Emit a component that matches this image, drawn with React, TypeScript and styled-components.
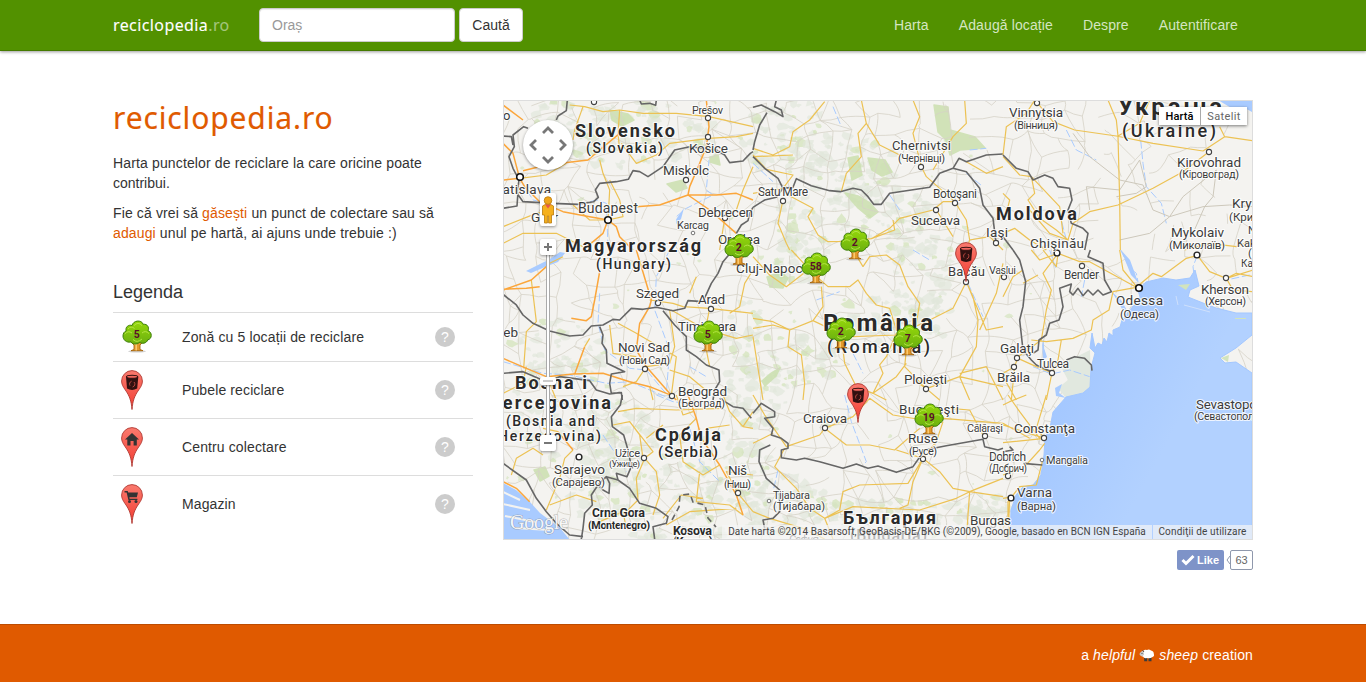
import React from 'react';
import styled, { createGlobalStyle } from 'styled-components';

const GlobalStyle = createGlobalStyle`
  * { box-sizing: border-box; }
  body {
    margin: 0;
    background: #fff;
    color: #333;
    font: 14px/20px "Liberation Sans", Arial, sans-serif;
  }
  a { color: #e05a00; text-decoration: none; }
  p { margin: 0 0 10px; }
`;

const Page = styled.div`
  display: flex;
  flex-direction: column;
  min-height: 682px;
`;
const Container = styled.div`
  width: 1170px;
  margin: 0 auto;
  padding: 0 15px;
  display: flex;
`;
const Tracked = styled.span<{ $by: number }>`
  letter-spacing: ${(p) => p.$by}px;
`;
const Header = styled.header`
  height: 51px;
  background: #529100;
  border-bottom: 1px solid #457a00;
  box-shadow: 0 1px 3px rgba(0, 0, 0, 0.4);
`;
const HeaderRow = styled(Container)`
  height: 50px;
  align-items: center;
`;
const Brand = styled.a`
  width: 146px;
  font: 16px/20px "Noto Sans", sans-serif;
  letter-spacing: 0.4px;
  -webkit-text-stroke: 0.1px;
  color: #fff;
  span { color: #a3c57b; }
`;
const SearchInput = styled.input`
  width: 196px;
  height: 34px;
  padding: 6px 12px;
  border: 1px solid #ccc;
  border-radius: 4px;
  box-shadow: inset 0 1px 1px rgba(0, 0, 0, 0.075);
  font: 14px/20px "Liberation Sans", sans-serif;
  &::placeholder { color: #999; opacity: 1; }
`;
const SearchButton = styled.button`
  height: 34px;
  width: 64px;
  margin-left: 4px;
  padding: 0;
  border: 1px solid #ccc;
  border-radius: 4px;
  background: #fff;
  color: #333;
  font: 14px/20px "Liberation Sans", sans-serif;
`;
const Nav = styled.nav`
  display: flex;
  gap: 30px;
  margin-left: auto;
  padding-right: 15px;
  letter-spacing: 0.11px;
  a { color: #d5e6c1; }
`;
const Main = styled(Container)`
  padding-top: 49px;
  gap: 30px;
  height: 573px;
  align-items: flex-start;
`;
const Side = styled.section`width: 360px;`;
const Title = styled.h1`
  margin: 1px 0 17px;
  height: 35px;
  font: 400 30px/33px "Noto Sans", sans-serif;
  letter-spacing: 0.87px;
  -webkit-text-stroke: 0.15px;
  color: #e05a00;
`;
const LegendTitle = styled.h2`
  margin: 39px 0 10px;
  font-size: 18px;
  font-weight: 400;
  line-height: 20px;
`;
const LegendRow = styled.div<{ $h: number }>`
  display: flex;
  align-items: center;
  height: ${(p) => p.$h}px;
  border-top: 1px solid #ddd;
  padding: 0 18px 0 8px;
`;
const LegendIcon = styled.div`
  width: 61px;
  display: flex;
  svg { display: block; }
`;
const Help = styled.span`
  margin-left: auto;
  width: 20px;
  height: 20px;
  border-radius: 50%;
  background: #ccc;
  color: #fff;
  text-align: center;
`;
const MapColumn = styled.section`width: 750px;`;
const MapFrame = styled.div`
  position: relative;
  height: 440px;
  border: 1px solid #ddd;
  overflow: hidden;
  font-family: Roboto, sans-serif;
  > svg { display: block; }
`;
const MapTypes = styled.div`
  position: absolute;
  top: 6px;
  right: 5px;
  display: flex;
  height: 18px;
  background: #fff;
  box-shadow: 0 1px 3px rgba(0, 0, 0, 0.5);
  font-size: 11px;
  line-height: 19px;
`;
const MapType = styled.span<{ $on?: boolean }>`
  width: ${(p) => (p.$on ? 42 : 46)}px;
  text-align: center;
  letter-spacing: ${(p) => (p.$on ? 0.1 : 0.35)}px;
  color: ${(p) => (p.$on ? '#000' : '#666')};
  font-weight: ${(p) => (p.$on ? 500 : 400)};
  border-right: ${(p) => (p.$on ? '1px solid #aaa' : '0')};
`;
const PanWheel = styled.div`
  position: absolute;
  left: 19px;
  top: 19px;
  width: 50px;
  height: 50px;
  border-radius: 50%;
  background: #fff;
  box-shadow: 0 1px 3px rgba(0, 0, 0, 0.4);
`;
const ZoomRail = styled.div`
  position: absolute;
  left: 42px;
  top: 152px;
  width: 4px;
  height: 182px;
  background: #fff;
  border: solid #aaa;
  border-width: 0 1px;
`;
const ZoomThumb = styled.div`
  position: absolute;
  left: 36px;
  top: 276px;
  width: 16px;
  height: 8px;
  border-radius: 2px;
  background: #fff;
  box-shadow: 0 1px 2px rgba(0, 0, 0, 0.4);
  &::after {
    content: '';
    display: block;
    margin: 3px;
    height: 2px;
    background: #ccc;
  }
`;
const ControlButton = styled.div<{ $top: number; $h?: number }>`
  position: absolute;
  left: 36px;
  top: ${(p) => p.$top}px;
  width: 16px;
  height: ${(p) => p.$h ?? 16}px;
  border-radius: 2px;
  background: #fff;
  box-shadow: 0 1px 3px rgba(0, 0, 0, 0.4);
  svg { display: block; }
`;
const Attribution = styled.div`
  position: absolute;
  right: 0;
  bottom: 0;
  display: flex;
  height: 14px;
  font-size: 10px;
  line-height: 14px;
  color: #444;
  white-space: nowrap;
`;
const Credit = styled.span<{ $w: number; $by: number }>`
  width: ${(p) => p.$w}px;
  letter-spacing: ${(p) => p.$by}px;
  background: rgba(245, 245, 245, 0.7);
  text-align: center;
  & + & { border-left: 1px solid #b3d1ff; }
`;
const Social = styled.div`
  display: flex;
  justify-content: flex-end;
  margin-top: 10px;
  height: 20px;
  font-size: 11px;
`;
const LikeButton = styled.span`
  display: flex;
  align-items: center;
  width: 47px;
  padding-left: 4px;
  gap: 2px;
  border-radius: 2px;
  background: #7e93c8;
  color: #fff;
  font-weight: 700;
`;
const LikeCount = styled.span`
  width: 23px;
  border: 1px solid #8f98ac;
  border-radius: 2px;
  line-height: 18px;
  text-align: center;
  color: #666;
`;
const Footer = styled.footer`
  height: 58px;
  background: #e05a00;
  border-top: 1px solid #bd4c00;
  color: #fff;
`;
const FooterRow = styled(Container)`
  justify-content: flex-end;
  align-items: center;
  height: 60px;
  white-space: pre;
  letter-spacing: 0.13px;
`;

/* ---------- Icons ---------- */

const Tree = ({ n }: { n: string }) => (
  <g>
    <ellipse cx="15" cy="30.8" rx="9" ry="1.3" fill="#000" opacity=".18" />
    <path d="M7.5 20 L12 24.5 V29 L9 30.2 H21 L18 29 V24.5 L22.5 20Z" fill="#e39a2b" stroke="#a8660d" strokeWidth=".9" />
    <path d="M14.2 23V30M10.5 21L13.5 24" stroke="#ffd27c" strokeWidth="1.3" />
    <path
      d="M4.2 10.5 C3 6.5 6.5 3.8 10.2 5 C11 -.2 19.5 -1.2 21.2 3.8 C25.4 3.2 27.6 7 26 10.3 C30.4 11.4 30.4 18.6 25.7 19.4 C24.6 22.9 20 23.6 17.8 21.8 C14.5 24.4 10.2 23.8 9 21.4 C4.4 22.6 1 19.2 1 15.6 C1 13 2.2 11 4.2 10.5Z"
      fill="url(#leaf)"
      stroke="#3b7d08"
      strokeWidth="1"
    />
    <path d="M2.8 13.5Q6 9.5 10 12.5M6 8.5Q9 5 12.5 8M12 5Q16 .8 20 5M20 12.5Q23.5 9.5 27 13M11 19Q15 23 20 18.5" fill="none" stroke="#b4e445" strokeWidth="1" />
    <text x="14.8" y="17" textAnchor="middle" fontSize="10.5" fontWeight="700" fontFamily="Roboto" fill="#5a1028">{n}</text>
  </g>
);

type PinKind = 'bin' | 'house' | 'cart';
const Pin = ({ kind }: { kind: PinKind }) => (
  <g>
    <path d="M11 39.5 C10.3 31 8.6 26 4.2 19.8 C1.8 16.5 .6 14 .6 11 A10.4 10.4 0 0 1 21.4 11 C21.4 14 20.2 16.5 17.8 19.8 C13.4 26 11.7 31 11 39.5Z" fill="url(#pin)" stroke="#b03a33" strokeWidth=".9" />
    {kind === 'bin' && (
      <g>
        <path d="M5 6.8 L6 18.6 Q11 21.2 16.2 18.6 L17.3 6.8Z" fill="#301010" />
        <ellipse cx="11.1" cy="6.8" rx="5.6" ry="1.5" fill="#f5665c" stroke="#301010" strokeWidth="1.1" />
        <path d="M10.6 11.2 A3 3 0 0 0 9 15.6M11.6 17A3 3 0 0 0 13 12" fill="none" stroke="#b5463f" strokeWidth="1" />
      </g>
    )}
    {kind === 'house' && <path d="M11 6 L18 12.5 H15.8 V18.5 H12.6 V14 H9.5 V18.5 H6.3 V12.5 H4Z" fill="#333" />}
    {kind === 'cart' && (
      <g fill="#333">
        <path d="M3.5 7H6.7L7.2 8.5H17L15.8 13.3H8.4L8.6 14.8H16.4V16H7.4L5.6 8.4H3.5Z" />
        <circle cx="8.5" cy="17.5" r="1.5" />
        <circle cx="15" cy="17.5" r="1.5" />
      </g>
    )}
  </g>
);

const Sheep = () => (
  <svg width="16" height="14" viewBox="0 0 16 14">
    <path d="M5.2 9h3v4.3h-3zM9.5 9h3v4.3h-3z" fill="#3b3b3b" />
    <path d="M4 3Q6 1 8 2Q10 1 12 2.5Q15 3.2 14.8 6Q15.8 8 13.5 9Q11 10.8 8 10Q5 10.8 4 8.5Q2.5 8.5 2 7L2.3 4.5Z" fill="#fff" />
    <path d="M.4 6L2.2 3.6L4.6 3.2L5 6.5L3.4 8.6L1.5 7.8Z" fill="#c9c9c9" />
    <path d="M2.4 5.4h1.2M3.5 2.2L5 4" stroke="#555" />
  </svg>
);

/* ---------- Map data ---------- */
/* The map is cut in sheets of 250 x 150, each drawn at three units to a pixel. */

type Sheet = { x: number; y: number; border?: string; motor?: string; road?: string; minor?: string; river?: string };

const SHEETS: Sheet[] = [
  {
    x: 503, y: 100,
    border: 'M193 0L190 32L165 48L160 60M75 85L62 80L30 105L34 140L18 170L30 205L48 240L42 280L60 305L150 310L225 313L272 305L286 292L277 270L290 250L340 245L376 238L390 212L410 215L435 230L480 200L515 150L560 140L640 150L665 165L680 188L720 183L742 160L750 155M0 108L25 110L30 135M0 325L42 318L45 275M410 0L415 12L440 10L458 16L460 0M700 400L715 375L735 362L740 340L750 322',
    motor: 'M0 240L50 235L65 260L110 305L180 335L260 350L315 360L300 400L240 450M50 235L30 160L0 130M60 212L130 195L255 180L290 150L350 100M315 360L340 380L350 410L390 450M400 320L470 315L555 285L640 285L700 280L750 300M560 260L590 190L610 140L618 80L610 0M555 285L560 260M0 15L60 60M555 285L620 330L700 400',
    road: 'M200 15L245 20L300 35L350 30L420 40L520 40L618 50L750 80M350 30L345 100L350 150M50 235L130 225L190 190M315 360L320 270L300 220L290 180M315 360L360 350L350 300L320 240M618 115L700 110L750 100M618 115L500 130L460 165L400 190L355 130M0 380L100 340L160 330M0 430L60 400L160 400L240 440M750 200L720 270L700 330L665 355L650 450M210 315L260 360L315 360M240 20L215 90L210 120',
    river: 'M55 245L90 300L160 315M230 312L282 300L310 310L315 440M525 380L520 350L550 325L630 285L610 270L618 180',
  },
  {
    x: 753, y: 100,
    border: 'M0 22L25 15L65 35L90 50L85 30L65 20L70 0M42 38L20 75L5 125L0 150M0 170L35 205L75 235L90 265L70 292L35 300L0 322M88 265L120 262L130 236L175 257L230 272L262 275L300 265L325 270L345 290L362 313L385 313L410 280L530 262L560 220L600 205L640 215L680 265L690 315L720 355L728 420M600 205L618 175L640 185L700 165L750 162',
    road: 'M0 145L60 165L110 140L120 95L170 60L215 5M0 170L120 165M0 280L90 265L120 225L40 208L0 165M90 300L75 370L100 430L110 450M105 285L180 325L165 350L195 405L225 425L280 424L355 416L410 385L440 355L540 330L570 305L605 305L520 230L505 200L480 100L500 50L480 0M325 0L340 70L315 100L325 170L280 220L265 275M340 70L380 135L440 165M540 210L600 110L640 70L635 0M605 305L640 360L650 420L710 410L750 450M640 185L700 220L750 200M650 420L640 450M550 330L600 410M420 360L425 390L355 416',
    river: 'M0 190L60 245M640 220L690 260M240 20L265 80M410 285L440 330M650 150L700 145',
  },
  {
    x: 1003, y: 100,
    border: 'M0 165L40 205L75 215L90 240L125 225L150 235L165 260L200 265L207 300L195 330L205 370L240 385L255 400L245 450M0 410L30 450M650 0L660 0',
    road: 'M0 165L10 80L70 40L95 0M100 5L150 65L215 90L340 108L450 130L600 153L665 110L750 122M315 0L340 60L345 108L350 300L352 450M0 170L50 225L85 230L95 280L75 300L110 355L160 390L195 420L210 370L260 335L345 315L450 265L540 215L618 155M345 108L410 70L440 0M0 280L20 300L10 340M195 420L140 400L80 330M180 400L170 320L85 230M0 400L35 385L80 420L130 450M650 80L665 110M545 450L620 430L700 440L750 420',
    minor: 'M210 100L260 170L350 240L420 255L450 330L500 350L600 320L680 315L750 320M500 350L540 290L640 210L630 290L605 320L570 400M260 330L250 260L350 270L410 180L430 260L400 280L340 290M500 350L440 400L350 420',
    river: 'M190 90L220 150L280 180M410 90L420 190L430 260L475 310L490 370M190 420L170 340',
  },
  {
    x: 503, y: 250,
    border: 'M0 133L40 165L60 195L90 220L140 243L200 258L240 255L265 228L300 225L330 208L350 210L385 175L420 178L460 172L510 182L545 175L555 152L600 155L625 100L645 70L660 35L690 0M480 182L515 225L550 260L550 300L580 320L610 345L648 360L650 395L635 420L630 450M290 230L300 255L297 280L310 300L312 340L365 365L325 372L320 400L325 430L355 428L358 450M0 370L60 365L90 378L130 395L170 380L260 392L280 420L320 432L350 428',
    motor: 'M0 120L85 90L130 50M110 110L70 115L0 118M290 65L275 150L265 200L250 212L205 205M400 0L445 150L440 170L410 220L400 300L430 350L505 436L520 450M0 325L70 355L130 380L210 372L300 370L380 395L440 410L505 436M245 290L215 372',
    road: 'M85 90L100 215L70 245L62 355M140 40L180 20M440 150L510 160L540 170L620 175L750 190M620 175L605 250L612 310L620 350M505 180L600 235L700 265L750 255M260 265L245 290M320 225L330 310L400 320M345 220L400 250L520 320L505 436M430 350L500 340L515 290L500 180M500 360L560 380L620 430M0 430L60 400L70 350M140 400L160 450M580 80L560 130M430 350L400 395L360 410M680 190L710 170L725 100L750 60M440 410L450 450',
    river: 'M290 130L285 220L305 300L380 355L430 360L480 420L500 440M0 335L120 370L200 375L310 400L380 395L500 445M500 0L460 80L455 180L500 300L490 430M560 350L610 380',
  },
  {
    x: 753, y: 250,
    road: 'M0 20L50 75L100 110L165 60L185 75L225 110L290 110L315 90L340 130L370 165L410 175L430 240M115 0L175 65M330 50L350 20L400 15L440 45L465 110L500 160L490 220L460 300L455 350L520 416L620 380L670 290L675 210L660 140L640 95L600 175L520 215L430 255L300 260L260 250L180 212L110 240L60 225L0 235M110 240L105 290L145 315L155 400L150 450M265 260L275 340L310 410L360 430L400 450M430 250L400 320L380 345L390 370L360 430M360 430L430 380L460 340M520 416L560 450M180 212L210 170L205 110M640 95L700 240L750 230M300 0L330 50M620 380L650 450M620 380L750 410M520 416L470 380M0 205L60 215L110 240M0 260L30 450M620 370L700 350L750 450M680 240L730 130L750 40',
    river: 'M645 100L690 200M480 0L530 30M300 310L330 370M190 150L260 125',
  },
  {
    x: 1003, y: 250,
    border: 'M30 0L50 30L68 95L60 170L50 210L60 300L85 330L100 345L145 365M262 0L255 20L300 40L305 90L325 125L300 135L285 120L270 135L255 120L240 137L225 115L210 135L200 125L205 102L170 115L180 170L168 210L140 220L130 255L108 270L105 300L90 310M190 330L215 320L245 325L265 345L267 362',
    road: 'M165 10L160 50L120 0M165 10L230 35L260 35L400 112L450 70L475 80L550 25L583 16L620 65L670 85L750 60M405 115L360 60L350 0M400 112L330 125L318 180L270 210L265 240L210 265L130 275L85 270M165 10L120 70L145 120L130 180L115 270L45 320L35 350L0 370M45 325L100 350L147 368M0 140L30 80L60 60M147 368L130 450M175 270L165 330L147 368M670 85L700 70L750 80M670 85L690 120L750 125M60 100L105 75M35 350L25 450M85 0L110 30L165 10M0 380L40 450',
    river: 'M353 0L390 75L405 95L400 70L375 50M583 16L570 50L575 90M140 0L160 60M245 90L235 140M120 270L125 330M90 350L145 372L200 360L260 380M740 75L670 90M330 130L345 150L360 180',
  },
  {
    x: 503, y: 395,
    border: 'M358 0L352 30L325 65L328 95L362 120L375 165L385 215L372 245L340 235L345 255L310 245L285 270L265 300L268 330L245 355L240 400L235 432M345 255L380 280L410 325L460 340L495 365L490 385L450 395L455 432M0 205L70 255L100 310L130 350L160 385L200 420L240 425M650 10L690 35L720 40L745 70M310 245L320 265L318 295L300 285L285 270',
    motor: 'M165 110L210 165M0 260L40 280L80 320M555 0L580 70L595 130L650 210L700 300L720 360',
    road: 'M210 165L185 190L170 250L130 345M165 110L120 100M25 240L40 190L90 160L120 180M425 190L460 230L470 300L450 360M425 190L400 250L405 315L360 360M345 50L400 40L520 45L660 40M520 0L540 60L570 50M580 70L530 120L540 200L600 240L650 210M660 0L680 50L720 95L750 100M705 295L670 230L750 240M330 90L380 80L450 170L425 190M480 370L535 300L600 310M490 390L560 350L700 340M590 230L580 320L680 330L720 360M610 100L680 90M750 50L720 95M290 380L360 350L370 400M140 330L220 300L280 320M705 295L750 350M480 90L430 130M380 80L410 120L420 190',
    river: 'M300 120L340 180L370 230M460 0L510 20L580 30M560 100L590 200L650 260',
  },
  {
    x: 753, y: 395,
    border: 'M0 55L25 25L65 50L65 65L35 70L60 100L55 120L85 130L105 145L105 160L85 165L85 188L130 195L155 190L200 200L270 220L310 207L345 220L375 213L430 232L480 215L515 165L580 152L690 133L695 155L735 165L750 160M52 150L20 165L18 200L40 250L80 285L80 350L60 370L30 375L35 400',
    road: 'M0 0L35 60L100 155L200 120L215 100L300 65L350 10L420 60L510 75L570 70L750 85M215 100L280 150L350 150L425 165L500 100M510 190L430 165M510 190L480 260L465 330L440 340M95 160L65 215L130 280L170 340L215 370M215 370L260 345L270 290L320 270L465 265L510 190M510 190L560 230L600 280L650 290L750 250M650 290L610 310L500 345L300 335L215 370M215 370L240 432M590 40L650 45L690 120M570 80L550 140L510 190M0 350L50 370L150 400L215 432M750 305L650 290L640 432M0 145L60 115',
    river: 'M275 0L295 80L340 200L330 210M75 225L60 290',
  },
  {
    x: 1003, y: 395,
    border: 'M0 170L30 165L20 155M60 205L118 210',
    road: 'M130 0L100 100L125 130L0 90M125 130L0 143M15 0L50 50L110 130M125 145L110 165L60 220L0 240M118 200L100 270L50 275L15 320L15 370L0 400M0 30L20 20L70 0M0 310L30 305M20 310L15 432M0 85L80 130',
  },
];

const SEA =
  'M1138 290L1146 282L1163 278L1176 280L1190 278L1195 270L1199 286L1190 290L1188 297L1203 303L1216 308L1236 313L1252 313V335L1236 348L1220 358L1225 363L1236 362L1252 373V540H1010L1011 510L1016 495L1023 487L1033 485L1041 475L1044 455L1045 438L1050 428L1053 412L1066 397L1083 393L1090 387L1091 368L1095 353L1090 348L1092 333L1095 348L1098 343L1102 345L1104 338L1107 342L1109 333L1113 336L1113 330L1120 327L1122 320L1130 310L1140 297Z';
const ADRIATIC = 'M503 483L516 490L530 502L540 513L560 528L570 540H503Z';

/* Repeatable pseudo random numbers for the fine texture. */
const random = (seed: number) => () => {
  seed = (seed * 16807) % 2147483647;
  return seed / 2147483647;
};

const countryLanes = (() => {
  const r = random(77);
  const cols = 44, rows = 27, step = 18;
  const at: number[][][] = [];
  for (let j = 0; j < rows; j++) {
    at.push([]);
    for (let i = 0; i < cols; i++) at[j].push([495 + i * step + r() * 16, 92 + j * step + r() * 16]);
  }
  let d = '';
  const link = (a: number[], b: number[]) => {
    const mx = (a[0] + b[0]) / 2 + (r() - 0.5) * 6, my = (a[1] + b[1]) / 2 + (r() - 0.5) * 6;
    d += `M${a[0].toFixed(1)} ${a[1].toFixed(1)}Q${mx.toFixed(1)} ${my.toFixed(1)} ${b[0].toFixed(1)} ${b[1].toFixed(1)}`;
  };
  for (let j = 0; j < rows - 1; j++)
    for (let i = 0; i < cols - 1; i++) {
      const sparse = at[j][i][0] > 1090 ? 0.3 : 0.66;
      if (r() < sparse) link(at[j][i], at[j][i + 1]);
      if (r() < sparse) link(at[j][i], at[j + 1][i]);
      if (r() < 0.1) link(at[j][i], at[j + 1][i + 1]);
    }
  return d;
})();

/* Hills and woods: centre, radii and number of patches. */
const HILLS = [
  [635, 135, 80, 35, 90], [565, 120, 30, 22, 25], [790, 140, 50, 40, 70], [850, 170, 50, 35, 60], [880, 215, 50, 35, 70],
  [920, 260, 35, 55, 70], [895, 320, 60, 25, 60], [800, 240, 30, 45, 60], [790, 360, 50, 28, 60], [760, 390, 35, 40, 55],
  [560, 350, 50, 30, 45], [570, 410, 60, 55, 60], [640, 490, 75, 50, 100], [720, 480, 55, 55, 80], [790, 505, 50, 30, 70],
  [900, 515, 95, 15, 60], [985, 515, 28, 20, 25], [620, 440, 35, 40, 50], [745, 330, 20, 35, 20],
];
const patches = (() => {
  const r = random(4242);
  const out: { d: string; c: string }[] = [];
  const blob = (x: number, y: number, s: number, c: string) => {
    const pts: string[] = [];
    for (let k = 0; k < 8; k++) {
      const a = (k / 8) * Math.PI * 2, q = s * (0.5 + r() * 0.8);
      pts.push(`${(x + Math.cos(a) * q * 1.3).toFixed(1)} ${(y + Math.sin(a) * q).toFixed(1)}`);
    }
    out.push({ d: `M${pts.join('L')}Z`, c });
  };
  HILLS.forEach(([x, y, rx, ry, n]) => {
    for (let k = 0; k < n; k++) {
      const a = r() * Math.PI * 2, q = Math.sqrt(r());
      blob(x + Math.cos(a) * rx * q, y + Math.sin(a) * ry * q, 1.5 + r() * 4, r() < 0.15 ? '#cfe2b3' : '#e1e7da');
    }
  });
  for (let k = 0; k < 80; k++) blob(505 + r() * 530, 102 + r() * 435, 1 + r() * 2.4, '#d3e4bb');
  return out;
})();

const WOODS =
  'M934 105L948 107L950 130L975 137L985 148L960 150L950 155L946 140L938 132ZM845 193L858 196L870 203L878 212L870 218L858 208ZM868 158L885 160L892 172L882 176L872 170ZM767 277L780 272L788 278L783 288L770 287ZM762 381L770 374L780 368L776 376L765 386ZM610 110L628 114L634 120L622 126L612 120ZM667 184L683 180L687 188L676 192ZM848 158L858 156L862 175L852 180ZM534 470L545 467L549 476L540 481ZM710 157L718 155L720 165L710 162Z';

type LabelRow = [text: string, left: number, base: number, size: number, width?: number, weight?: number];
const LABELS: LabelRow[] = [
  ['Slovensko', 575, 137, 18, 100, 700], ['(Slovakia)', 586, 153, 14, 77, 500],
  ['Prešov', 692, 114, 11, 31], ['Košice', 689, 153, 13.5, 39], ['Miskolc', 663, 175, 13.5, 46],
  ['Bratislava', 489, 193.5, 13.5, 62], ['Győr', 531, 222, 13.5, 27], ['o', 503, 120, 13],
  ['Budapest', 578, 213, 14, 60], ['Debrecen', 698, 217, 13.5, 55], ['Karcag', 677, 229, 11, 32],
  ['Magyarország', 565, 252, 18, 136, 700], ['(Hungary)', 596, 269, 14, 75, 500], ['Oradea', 718, 244, 13.5, 42],
  ['Satu Mare', 758, 196, 12, 50], ['Chernivtsi', 892, 150, 13, 59], ['(Чернівці)', 898, 162, 11, 47],
  ['Botoşani', 933, 198, 12, 44], ['Suceava', 911, 225, 13.5, 49], ['Moldova', 996, 220, 18, 81, 700],
  ['Iaşi', 986, 237, 13.5, 22], ['Chişinău', 1030, 248, 13.5, 54], ['Vinnytsia', 1009, 117, 13.5, 54],
  ['(Вінниця)', 1014, 129, 11, 44], ['Україна', 1118, 115, 24, 104, 700], ['(Ukraine)', 1122, 137, 18, 94, 500],
  ['Kirovohrad', 1177, 166.5, 13.5, 64], ['(Кіровоград)', 1179, 178, 11, 60], ['Kryvyi Rih', 1232, 208, 13.5], ['(Кривий Ріг)', 1229, 221, 11.5],
  ['Mykolaiv', 1171, 237, 13.5, 53], ['(Миколаїв)', 1169, 248.5, 11.5, 56], ['Nova', 1248, 234, 11], ['Kakhovka', 1237, 247, 11],
  ['(Нова', 1248, 257, 11], ['Каховка)', 1241, 267, 10], ['Kherson', 1201, 294, 13.5, 48], ['(Херсон)', 1205, 304.5, 11, 41],
  ['Odessa', 1116, 305, 13.5, 47], ['(Одеса)', 1120, 317.5, 11.5, 39], ['Bender', 1064, 279, 12, 35], ['Vaslui', 989, 274, 11, 27],
  ['Bacău', 948, 276, 13, 37], ['Galaţi', 1000, 353, 13.5, 34], ['Tulcea', 1037, 368, 12, 32], ['Brăila', 997, 382, 13.5, 33],
  ['Cluj-Napoca', 736, 273, 13.5, 74], ['Szeged', 636, 298, 13.5, 43], ['Arad', 698, 304, 13.5, 27], ['Timişoara', 678, 331, 13.5, 58],
  ['Novi Sad', 618, 352, 13.5, 52], ['(Нови Сад)', 619, 363.5, 11, 51], ['Zagreb', 476, 337, 13.5, 42],
  ['Beograd', 678, 396, 13.5, 49], ['(Београд)', 678, 407, 11, 47], ['Bosna i', 515, 389, 18, 72, 700],
  ['Hercegovina', 488, 409, 18, 123, 700], ['(Bosnia and', 506, 426, 14, 89, 500], ['Herzegovina)', 498, 441, 14, 103, 500],
  ['România', 823, 331, 24, 110, 700], ['(Romania)', 827, 353, 18, 103, 500], ['Ploieşti', 904, 384, 13.5, 43],
  ['Bucureşti', 899, 414, 13.5, 60], ['Craiova', 803, 423, 13.5, 44], ['Ruse', 908, 443, 13.5, 30], ['(Русе)', 909, 454.5, 11, 28],
  ['Călăraşi', 967, 432, 11, 36], ['Constanţa', 1014, 433, 13.5, 61], ['Dobrich', 989, 461, 12, 37], ['(Добрич)', 989, 471.5, 10, 38],
  ['Mangalia', 1046, 464, 11, 42], ['Varna', 1017, 497, 13.5, 35], ['(Варна)', 1017, 510, 11.5, 39], ['Burgas', 970, 525, 13.5, 41],
  ['България', 843, 524, 18, 93, 700], ['(Bulgaria)', 850, 541, 16, 77, 500], ['София', 789, 544, 12, 30],
  ['Tijabara', 773, 499, 11, 37], ['(Тијабара)', 773, 510, 11, 52], ['Niš', 728, 475, 13.5, 19], ['(Ниш)', 724, 488, 11, 27],
  ['Србија', 655, 441, 18, 66, 700], ['(Serbia)', 658, 457, 15, 60, 500], ['Užice', 615, 457, 11, 25], ['(Ужице)', 609, 467, 9.5, 31],
  ['Sarajevo', 554, 474, 13.5, 51], ['(Сарајево)', 552, 486, 11.5, 53], ['Crna Gora', 592, 517, 12.5, 53, 700],
  ['(Montenegro)', 588, 528.5, 11, 62, 700], ['Kosova', 673, 534.5, 12.5, 39, 700], ['(Kosovo)', 673, 546, 12, 40, 700],
  ['Sevastopol', 1196, 409, 13.5, 64], ['(Севастополь)', 1194, 420, 11, 69],
];

const TOWNS = [
  [708, 118], [708, 137], [686, 180], [725, 218], [594, 102], [783, 201], [921, 167], [936, 210],
  [955, 203], [996, 243], [1037, 103], [1209, 152], [1082, 266], [1226, 278], [966, 282], [1004, 277],
  [1017, 358], [1014, 367], [1052, 373], [658, 303], [711, 309], [645, 369], [672, 396], [926, 389], [825, 428], [923, 459],
  [985, 436], [1044, 438], [1008, 476], [644, 458], [738, 493],
];
const VILLAGES = [[769, 501], [1042, 460], [693, 233]];
const CITIES = [[1011, 498], [1057, 253], [1197, 255], [579, 457]];
const CAPITALS = [[520, 177], [608, 220], [1139, 288]];

const TREES: [number, number, string][] = [
  [724, 234, '2'], [840, 228.5, '2'], [801, 252.5, '58'], [693, 320.5, '5'], [826, 317.5, '2'], [893, 324.5, '7'], [914, 403.5, '19'],
];
const PINS = [[955, 242], [847, 383]];

const MapDrawing = () => (
  <svg width="748" height="438" viewBox="504 101 748 438">
    <defs>
      <linearGradient id="leaf" x1="0" y1="0" x2="0" y2="1">
        <stop offset="0" stopColor="#95d80a" />
        <stop offset="1" stopColor="#6bb010" />
      </linearGradient>
      <linearGradient id="pin" x1="0" y1="0" x2="0" y2="1">
        <stop offset="0" stopColor="#fa7a6e" />
        <stop offset="1" stopColor="#f23c32" />
      </linearGradient>
      <linearGradient id="shore" gradientUnits="userSpaceOnUse" x1="1070" y1="360" x2="1180" y2="420">
        <stop offset="0" stopColor="#a3c7ff" />
        <stop offset="1" stopColor="#b2d1ff" />
      </linearGradient>
    </defs>
    <rect x="503" y="100" width="750" height="440" fill="#f4f3f0" />
    {patches.map((p, i) => <path key={i} d={p.d} fill={p.c} opacity=".65" />)}
    <path d={WOODS} fill="#cbe0af" strokeLinejoin="round" stroke="#cbe0af" strokeWidth="1.5" opacity=".85" />
    <path d={countryLanes} fill="none" stroke="#d6d2c7" strokeWidth=".8" />
    <path d="M1060 365L1090 350L1091 390L1066 398L1058 388L1068 380Z" fill="#e1e8df" />
    <g fill="#a9cbff">
      <path d={SEA} fill="url(#shore)" stroke="#a3c7ff" strokeWidth="1" />
      <path d={ADRIATIC} />
      <path d="M1218 100L1233 109L1243 107L1252 112V100Z" />
      <path d="M526 271L540 264L550 259L560 252L565 253L558 262L545 267L531 273Z" />
      <path d="M677 218L684 208L681 219L676 224ZM1112 292L1121 300L1128 312L1122 308ZM1055 388L1062 384L1059 393L1066 398L1056 396ZM1121 250L1130 260L1138 282L1131 275ZM1042 342L1047 357L1043 360Z" />
    </g>
    <path d="M503 492L520 500M503 504L530 510M505 516L535 522M515 528L550 530" stroke="#f4f3f0" strokeWidth="2" fill="none" />
    <path d="M1176 296L1178 305M1184 305L1210 312" stroke="#cfe0fb" strokeWidth="1" />
    <path d="M1178 285L1190 284L1186 290ZM1235 318H1246V319H1235ZM1221 358L1229 355L1228 362Z" fill="#d2e4bd" />
    {SHEETS.map((s, i) => (
      <g key={i} transform={`translate(${s.x} ${s.y}) scale(.33333)`} fill="none" strokeLinejoin="round">
        {s.river && <path d={s.river} stroke="#a9cbff" strokeWidth="3" strokeDasharray="24 8" />}
        {s.minor && <path d={s.minor} stroke="#cdc8bb" strokeWidth="3" />}
        {s.road && <path d={s.road} stroke="#ecc254" strokeWidth="3.6" />}
        {s.motor && <path d={s.motor} stroke="#fba63b" strokeWidth="4.5" />}
        {s.border && <path d={s.border} stroke="#666" strokeWidth="4.8" />}
      </g>
    ))}
    <path d="M672 520L679 507L680 495L690 494L693 502L705 505L708 518L716 527" fill="none" stroke="#666" strokeWidth="1.6" strokeDasharray="6 4" />
    {TOWNS.map(([x, y], i) => <circle key={i} cx={x} cy={y} r="2.6" fill="#fff" stroke="#444" strokeWidth="1.1" />)}
    {VILLAGES.map(([x, y], i) => <circle key={i} cx={x} cy={y} r="1.8" fill="#fff" stroke="#666" strokeWidth=".9" />)}
    {CITIES.map(([x, y], i) => <circle key={i} cx={x} cy={y} r="2.9" fill="#fff" stroke="#222" strokeWidth="1.4" />)}
    {CAPITALS.map(([x, y], i) => <circle key={i} cx={x} cy={y} r="3.3" fill="#fff" stroke="#111" strokeWidth="1.6" />)}
    {LABELS.map(([t, x, y, size, w, weight], i) => (
      <text
        key={i} x={x} y={y} fontSize={size} fontWeight={weight ?? 400} textLength={w}
        fontFamily="Roboto, sans-serif" fill={weight ? '#2a2a2a' : '#3c3c3c'}
        stroke="#fff" strokeOpacity=".8" strokeWidth="2.2" strokeLinejoin="round" paintOrder="stroke"
      >
        {t}
      </text>
    ))}
    {TREES.map(([x, y, n]) => <g key={`${x}`} transform={`translate(${x} ${y})`}><Tree n={n} /></g>)}
    {PINS.map(([x, y]) => <g key={x} transform={`translate(${x} ${y})`}><Pin kind="bin" /></g>)}
    <text x="510" y="529" fontSize="20" textLength="58" fontFamily="Liberation Serif, serif" fill="#fff" fillOpacity=".9" stroke="#777" strokeOpacity=".45" strokeWidth="1.2" paintOrder="stroke">Google</text>
  </svg>
);

const PinSvg = ({ kind }: { kind: PinKind }) => <svg width="22" height="40" viewBox="0 0 22 40"><Pin kind={kind} /></svg>;

const LEGEND = [
  { h: 49, label: 'Zonă cu 5 locații de reciclare', by: 0.13, icon: <svg width="32" height="34" viewBox="-1 -.5 32 34"><Tree n="5" /></svg> },
  { h: 57, label: 'Pubele reciclare', by: 0.12, icon: <PinSvg kind="bin" /> },
  { h: 57, label: 'Centru colectare', by: 0.12, icon: <PinSvg kind="house" /> },
  { h: 57, label: 'Magazin', by: 0.12, icon: <PinSvg kind="cart" /> },
];

export default function App() {
  return (
    <Page>
      <GlobalStyle />
      <Header>
        <HeaderRow>
          <Brand>reciclopedia<span>.ro</span></Brand>
          <SearchInput placeholder="Oraș" />
          <SearchButton>Caută</SearchButton>
          <Nav>
            <a>Harta</a>
            <a>Adaugă locație</a>
            <a>Despre</a>
            <a>Autentificare</a>
          </Nav>
        </HeaderRow>
      </Header>
      <Main>
        <Side>
          <Title>reciclopedia.ro</Title>
          <p><Tracked $by={0.14}>Harta punctelor de reciclare la care oricine poate</Tracked> contribui.</p>
          <p>
            <Tracked $by={0.13}>Fie că vrei să <a>găsești</a> un punct de colectare sau să</Tracked>{' '}
            <Tracked $by={0.13}><a>adaugi</a> unul pe hartă, ai ajuns unde trebuie :)</Tracked>
          </p>
          <LegendTitle>Legenda</LegendTitle>
          {LEGEND.map((row) => (
            <LegendRow key={row.label} $h={row.h}>
              <LegendIcon>{row.icon}</LegendIcon>
              <Tracked $by={row.by}>{row.label}</Tracked>
              <Help>?</Help>
            </LegendRow>
          ))}
        </Side>
        <MapColumn>
          <MapFrame>
            <MapDrawing />
            <PanWheel>
              <svg width="50" height="50" viewBox="0 0 50 50" fill="none" stroke="#777" strokeWidth="2.8">
                <path d="M20 13L25 8L30 13M20 37L25 42L30 37M13 20L8 25L13 30M37 20L42 25L37 30" />
              </svg>
            </PanWheel>
            <ControlButton $top={92} $h={33}>
              <svg width="16" height="33" viewBox="0 0 16 33">
                <path d="M2.5 13Q8 9 13.5 13V22H11.5V30H8.6V23H7.4V30H4.5V22H2.5Z" fill="#f5b01e" stroke="#b97a0b" strokeWidth=".8" />
                <path d="M5 11.5H11L8 15.5Z" fill="#e8554b" />
                <circle cx="8" cy="7.5" r="3.8" fill="#f0a51c" stroke="#b97a0b" strokeWidth=".8" />
              </svg>
            </ControlButton>
            <ZoomRail />
            <ZoomThumb />
            <ControlButton $top={138}>
              <svg width="16" height="16" stroke="#777" strokeWidth="2"><path d="M4 8H12M8 4V12" /></svg>
            </ControlButton>
            <ControlButton $top={334}>
              <svg width="16" height="16" stroke="#777" strokeWidth="2"><path d="M4 8H12" /></svg>
            </ControlButton>
            <MapTypes>
              <MapType $on>Hartă</MapType>
              <MapType>Satelit</MapType>
            </MapTypes>
            <Attribution>
              <Credit $w={430} $by={0.05}>Date hartă ©2014 Basarsoft, GeoBasis-DE/BKG (©2009), Google, basado en BCN IGN España</Credit>
              <Credit $w={100} $by={0.15}>Condiţii de utilizare</Credit>
            </Attribution>
          </MapFrame>
          <Social>
            <LikeButton>
              <svg width="14" height="12" viewBox="0 0 14 12" fill="none" stroke="#fff" strokeWidth="3"><path d="M1.5 6L5 9.5L12.5 2" /></svg>
              Like
            </LikeButton>
            <svg width="6" height="20" viewBox="0 0 6 20"><path d="M6 6L3 10L6 14" fill="#fff" stroke="#8f98ac" /></svg>
            <LikeCount>63</LikeCount>
          </Social>
        </MapColumn>
      </Main>
      <Footer>
        <FooterRow>
          <span>a <em>helpful</em> </span><Sheep /><span> <em>sheep</em> creation</span>
        </FooterRow>
      </Footer>
    </Page>
  );
}
